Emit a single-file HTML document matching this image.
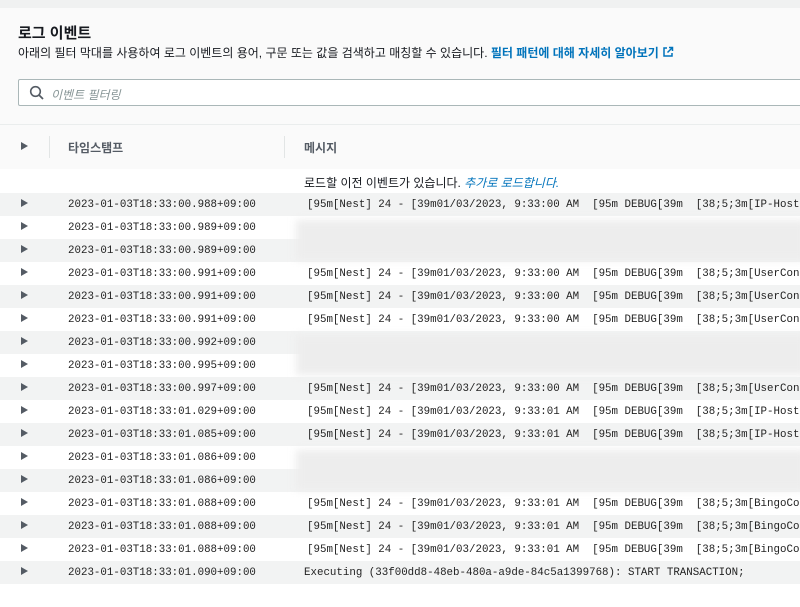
<!DOCTYPE html>
<html><head><meta charset="utf-8"><style>
body{margin:0;width:800px;height:598px;overflow:hidden;background:#fafafa;font-family:"Liberation Sans","Noto Sans CJK KR",sans-serif;color:#16191f;position:relative}
.top{position:absolute;left:0;top:0;width:800px;height:8px;background:#f0f1f1}
h1{position:absolute;left:18px;top:22px;margin:0;font-size:15px;font-weight:bold}
.desc{position:absolute;left:18px;top:44px;font-size:12px;white-space:nowrap}
.desc a{color:#0073bb;font-weight:bold;text-decoration:none}
.search{position:absolute;left:18px;top:79px;width:800px;height:25px;border:1px solid #aab7b8;border-radius:2px;background:#fff}
.search span{position:absolute;left:32px;top:6px;font-size:12px;color:#879596;font-style:italic}
.hdr{position:absolute;left:0;top:124px;width:800px;height:44px;border-top:1px solid #eaeded;border-bottom:1px solid #eaeded;background:#fafafa}
.hdr b{position:absolute;top:14px;font-size:12px;color:#545b64}
.sep{position:absolute;top:11px;width:1px;height:22px;background:#e2e5e5}
.tri{position:absolute;width:0;height:0;border-left:7px solid #545b64;border-top:4px solid transparent;border-bottom:4px solid transparent}
.load{position:absolute;left:0;top:169px;width:800px;height:24px;background:#fff;font-size:12px}
.load span{position:absolute;left:304px;top:5px}
.load i{color:#0073bb}
.row{position:absolute;left:0;width:800px;height:23px;font-family:"Liberation Mono",monospace;font-size:10.8px;white-space:pre;overflow:hidden;color:#222}
.row .ts{position:absolute;left:68px;top:6px}
.row .m{position:absolute;left:307px;top:6px}
.row .tri{left:21px;top:6px}
.g{background:#f2f3f3}.w{background:#fff}
.blur{position:absolute;left:296px;background:#ededed;filter:blur(4px)}
</style></head><body>
<div class="top"></div>
<h1>로그 이벤트</h1>
<div class="desc">아래의 필터 막대를 사용하여 로그 이벤트의 용어, 구문 또는 값을 검색하고 매칭할 수 있습니다. <a>필터 패턴에 대해 자세히 알아보기 <svg width="12" height="12" viewBox="0 0 12 12" style="vertical-align:-1px"><path d="M5 2H2v8h8V7M7 1.5h3.5V5M10.5 1.5L5.5 6.5" fill="none" stroke="#0073bb" stroke-width="1.5"/></svg></a></div>
<div class="search"><svg width="16" height="16" viewBox="0 0 16 16" style="position:absolute;left:10px;top:5px"><circle cx="6.5" cy="6.5" r="4.8" fill="none" stroke="#545b64" stroke-width="1.6"/><path d="M10 10l4 4" stroke="#545b64" stroke-width="1.8"/></svg><span>이벤트 필터링</span></div>
<div class="hdr"><div class="tri" style="left:21px;top:17px"></div><div class="sep" style="left:49px"></div><b style="left:68px">타임스탬프</b><div class="sep" style="left:284px"></div><b style="left:304px">메시지</b></div>
<div class="load"><span>로드할 이전 이벤트가 있습니다. <i>추가로 로드합니다.</i></span></div>
<div class="row g" style="top:193px"><div class="tri"></div><span class="ts">2023-01-03T18:33:00.988+09:00</span><span class="m">[95m[Nest] 24 - [39m01/03/2023, 9:33:00 AM  [95m DEBUG[39m  [38;5;3m[IP-HostCheck]</span></div>
<div class="row w" style="top:216px"><div class="tri"></div><span class="ts">2023-01-03T18:33:00.989+09:00</span></div>
<div class="row g" style="top:239px"><div class="tri"></div><span class="ts">2023-01-03T18:33:00.989+09:00</span></div>
<div class="row w" style="top:262px"><div class="tri"></div><span class="ts">2023-01-03T18:33:00.991+09:00</span><span class="m">[95m[Nest] 24 - [39m01/03/2023, 9:33:00 AM  [95m DEBUG[39m  [38;5;3m[UserController]</span></div>
<div class="row g" style="top:285px"><div class="tri"></div><span class="ts">2023-01-03T18:33:00.991+09:00</span><span class="m">[95m[Nest] 24 - [39m01/03/2023, 9:33:00 AM  [95m DEBUG[39m  [38;5;3m[UserController]</span></div>
<div class="row w" style="top:308px"><div class="tri"></div><span class="ts">2023-01-03T18:33:00.991+09:00</span><span class="m">[95m[Nest] 24 - [39m01/03/2023, 9:33:00 AM  [95m DEBUG[39m  [38;5;3m[UserController]</span></div>
<div class="row g" style="top:331px"><div class="tri"></div><span class="ts">2023-01-03T18:33:00.992+09:00</span></div>
<div class="row w" style="top:354px"><div class="tri"></div><span class="ts">2023-01-03T18:33:00.995+09:00</span></div>
<div class="row g" style="top:377px"><div class="tri"></div><span class="ts">2023-01-03T18:33:00.997+09:00</span><span class="m">[95m[Nest] 24 - [39m01/03/2023, 9:33:00 AM  [95m DEBUG[39m  [38;5;3m[UserController]</span></div>
<div class="row w" style="top:400px"><div class="tri"></div><span class="ts">2023-01-03T18:33:01.029+09:00</span><span class="m">[95m[Nest] 24 - [39m01/03/2023, 9:33:01 AM  [95m DEBUG[39m  [38;5;3m[IP-HostCheck]</span></div>
<div class="row g" style="top:423px"><div class="tri"></div><span class="ts">2023-01-03T18:33:01.085+09:00</span><span class="m">[95m[Nest] 24 - [39m01/03/2023, 9:33:01 AM  [95m DEBUG[39m  [38;5;3m[IP-HostCheck]</span></div>
<div class="row w" style="top:446px"><div class="tri"></div><span class="ts">2023-01-03T18:33:01.086+09:00</span></div>
<div class="row g" style="top:469px"><div class="tri"></div><span class="ts">2023-01-03T18:33:01.086+09:00</span></div>
<div class="row w" style="top:492px"><div class="tri"></div><span class="ts">2023-01-03T18:33:01.088+09:00</span><span class="m">[95m[Nest] 24 - [39m01/03/2023, 9:33:01 AM  [95m DEBUG[39m  [38;5;3m[BingoController]</span></div>
<div class="row g" style="top:515px"><div class="tri"></div><span class="ts">2023-01-03T18:33:01.088+09:00</span><span class="m">[95m[Nest] 24 - [39m01/03/2023, 9:33:01 AM  [95m DEBUG[39m  [38;5;3m[BingoController]</span></div>
<div class="row w" style="top:538px"><div class="tri"></div><span class="ts">2023-01-03T18:33:01.088+09:00</span><span class="m">[95m[Nest] 24 - [39m01/03/2023, 9:33:01 AM  [95m DEBUG[39m  [38;5;3m[BingoController]</span></div>
<div class="row g" style="top:561px"><div class="tri"></div><span class="ts">2023-01-03T18:33:01.090+09:00</span><span class="m" style="left:304px">Executing (33f00dd8-48eb-480a-a9de-84c5a1399768): START TRANSACTION;</span></div>
<div class="row w" style="top:584px"></div>
<div class="blur" style="top:220px;width:510px;height:40px"></div>
<div class="blur" style="top:335px;width:510px;height:40px"></div>
<div class="blur" style="top:450px;width:510px;height:40px"></div>
</body></html>
